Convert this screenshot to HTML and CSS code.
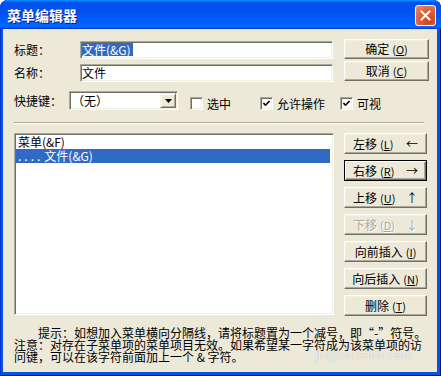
FILE: index.html
```html
<!DOCTYPE html>
<html lang="zh-CN">
<head>
<meta charset="UTF-8">
<meta name="viewport" content="width=device-width, initial-scale=1.0">
<title>菜单编辑器</title>
<link rel="stylesheet" href="styles.css">
</head>
<body>

<div class="window">
  <div class="titlebar">
    <span class="title">菜单编辑器</span>
    <span class="close">
      <svg width="11" height="11" viewBox="0 0 11 11"><path d="M1.5 1.5 L9.5 9.5 M9.5 1.5 L1.5 9.5" stroke="#fff" stroke-width="2" stroke-linecap="square"/></svg>
    </span>
  </div>

  <div class="content">
    <div class="top">
      <div class="fields">
        <div class="row">
          <span class="label">标题：</span>
          <div class="edit"><span class="sel">文件(&amp;G)</span></div>
        </div>
        <div class="row row-second">
          <span class="label">名称：</span>
          <div class="edit">文件</div>
        </div>
        <div class="row row-opts">
          <span class="label label-short">快捷键：</span>
          <div class="combo">
            <span class="combo-text">（无）</span>
            <span class="drop">
              <svg width="7" height="4" viewBox="0 0 7 4"><path d="M0 0 H7 L3.5 4 Z" fill="#000"/></svg>
            </span>
          </div>
          <span class="check check-1"><span class="box"></span>选中</span>
          <span class="check check-2"><span class="box"><svg width="7" height="7" viewBox="0 0 7 7"><path d="M0.5 3 L2.5 5.2 L6.5 1" fill="none" stroke="#000" stroke-width="1.6"/></svg></span>允许操作</span>
          <span class="check check-3"><span class="box"><svg width="7" height="7" viewBox="0 0 7 7"><path d="M0.5 3 L2.5 5.2 L6.5 1" fill="none" stroke="#000" stroke-width="1.6"/></svg></span>可视</span>
        </div>
      </div>
      <div class="side">
        <div class="btn">确定<span class="key">(<u>O</u>)</span></div>
        <div class="btn">取消<span class="key">(<u>C</u>)</span></div>
      </div>
    </div>

    <div class="sep"></div>

    <div class="middle">
      <div class="list">
        <div class="item">菜单(&amp;F)</div>
        <div class="item active"><span class="dots">....</span>文件(&amp;G)</div>
      </div>
      <div class="side side-list">
        <div class="btn btn-arrow"><span>左移<span class="key">(<u>L</u>)</span></span><span>←</span></div>
        <div class="btn btn-arrow btn-default"><span>右移<span class="key">(<u>R</u>)</span></span><span>→</span></div>
        <div class="btn btn-arrow"><span>上移<span class="key">(<u>U</u>)</span></span><span>↑</span></div>
        <div class="btn btn-arrow btn-disabled"><span>下移<span class="key">(<u>D</u>)</span></span><span>↓</span></div>
        <div class="btn">向前插入<span class="key">(<u>I</u>)</span></div>
        <div class="btn">向后插入<span class="key">(<u>N</u>)</span></div>
        <div class="btn">删除<span class="key">(<u>T</u>)</span></div>
      </div>
    </div>

    <p class="hint">提示：如想加入菜单横向分隔线，请将标题置为一个减号，即“-”符号。<br>注意：对存在子菜单项的菜单项目无效。如果希望某一字符成为该菜单项的访<br>问键，可以在该字符前面加上一个 &amp; 字符。</p>

    <span class="watermark">jingyan.baidu.com</span>
  </div>
</div>

</body>
</html>
```

FILE: styles.css
```css
html, body {
  margin: 0;
  background: #fff;
}
body {
  font-family: "Noto Sans CJK SC", "Noto Sans", sans-serif;
  font-size: 12px;
  color: #000;
}
.window {
  width: 441px;
  height: 376px;
  display: flex;
  flex-direction: column;
  overflow: hidden;
  border-radius: 8px 8px 0 0;
  background: #0855dd;
  box-shadow: inset 1px 0 #0831d9, inset -1px 0 #00138c, inset 0 -1px #00138c;
}
.titlebar {
  height: 29px;
  flex: none;
  display: flex;
  justify-content: space-between;
  align-items: flex-start;
  padding: 0 5px 0 7px;
  box-sizing: border-box;
  background: linear-gradient(180deg, #0997ff, #0053ee 8%, #0050ee 40%, #0066ff 88%, #0066ff 93%, #005bff 95%, #003dd7 96%, #003dd7);
}
.title {
  color: #fff;
  font-weight: bold;
  font-size: 14px;
  line-height: 16px;
  margin-top: 7px;
  text-shadow: 1px 1px 0 #0a1a8a;
}
.close {
  width: 21px;
  height: 21px;
  margin-top: 5px;
  box-sizing: border-box;
  border: 1px solid #fff;
  border-radius: 3px;
  background: radial-gradient(circle at 70% 80%, #cc4622 0, #e0603c 55%, #ee8a6a 100%);
  display: flex;
  align-items: center;
  justify-content: center;
}
.content {
  flex: 1;
  position: relative;
  margin: 0 4px 4px 3px;
  padding: 10px 8px 0 11px;
  background: #ece9d8;
}

/* top part: fields + ok/cancel */
.top {
  display: flex;
  gap: 11px;
}
.fields {
  width: 319px;
  padding-top: 2px;
}
.row {
  display: flex;
  align-items: center;
  height: 18px;
}
.row-second {
  margin-top: 5px;
}
.row-opts {
  margin-top: 9px;
  height: 19px;
  align-items: flex-start;
}
.label {
  width: 66px;
  line-height: 18px;
  flex: none;
}
.label-short {
  width: 55px;
  line-height: 19px;
}
.edit {
  width: 253px;
  height: 18px;
  box-sizing: border-box;
  background: #fff;
  border: 1px solid;
  border-color: #aca899 #fff #fff #aca899;
  box-shadow: inset 1px 1px #716f64, inset -1px -1px #f1efe2;
  padding: 1px 0 0 1px;
  line-height: 14px;
}
.sel {
  display: inline-block;
  background: #316ac5;
  color: #fff;
  line-height: 13px;
  padding-right: 2px;
}
.combo {
  width: 109px;
  height: 19px;
  box-sizing: border-box;
  background: #fff;
  border: 1px solid;
  border-color: #aca899 #fff #fff #aca899;
  box-shadow: inset 1px 1px #716f64, inset -1px -1px #f1efe2;
  display: flex;
  justify-content: space-between;
  padding: 1px;
  flex: none;
}
.combo-text {
  line-height: 15px;
  padding-left: 1px;
}
.drop {
  width: 16px;
  height: 15px;
  box-sizing: border-box;
  background: #ece9d8;
  border: 1px solid;
  border-color: #f1efe2 #716f64 #716f64 #f1efe2;
  box-shadow: inset 1px 1px #fff, inset -1px -1px #aca899;
  display: flex;
  align-items: center;
  justify-content: center;
}
.check {
  display: flex;
  align-items: center;
  gap: 4px;
  margin-top: 6px;
  line-height: 13px;
  flex: none;
}
.check-1 { margin-left: 12px; }
.check-2 { margin-left: 29px; }
.check-3 { margin-left: 15px; }
.box {
  width: 13px;
  height: 13px;
  box-sizing: border-box;
  background: #fff;
  border: 1px solid;
  border-color: #aca899 #fff #fff #aca899;
  box-shadow: inset 1px 1px #716f64, inset -1px -1px #f1efe2;
  display: flex;
  align-items: center;
  justify-content: center;
}

/* buttons */
.side {
  width: 85px;
  display: flex;
  flex-direction: column;
  gap: 2px;
}
.btn {
  height: 20px;
  box-sizing: border-box;
  background: #ece9d8;
  border: 1px solid;
  border-color: #fff #716f64 #716f64 #fff;
  box-shadow: inset -1px -1px #aca899, inset 1px 1px #f1efe2;
  display: flex;
  align-items: center;
  justify-content: center;
  line-height: 14px;
}
.key {
  margin-left: 3px;
  font-size: 11px;
}
.side-list {
  width: 83px;
  gap: 6px;
}
.side-list .btn {
  height: 21px;
}
.btn-arrow {
  justify-content: space-between;
  padding: 0 8px;
}
.btn-default {
  border-color: #000;
  box-shadow: inset 1px 1px #fff, inset -1px -1px #716f64, inset -2px -2px #aca899;
}
.btn-disabled {
  color: #aca899;
  text-shadow: 1px 1px 0 #fff;
}

.sep {
  height: 0;
  margin: 12px 5px 0 0;
  border-top: 1px solid #aca899;
  border-bottom: 1px solid #fff;
}

/* list */
.middle {
  display: flex;
  gap: 10px;
  margin-top: 9px;
}
.list {
  width: 320px;
  height: 182px;
  box-sizing: border-box;
  background: #fff;
  border: 1px solid;
  border-color: #aca899 #fff #fff #aca899;
  box-shadow: inset 1px 1px #716f64, inset -1px -1px #f1efe2;
  padding: 1px 3px 1px 1px;
}
.item {
  height: 14px;
  line-height: 14px;
  padding-left: 2px;
}
.item.active {
  background: #316ac5;
  color: #fff;
}
.dots {
  letter-spacing: 3px;
  margin-right: 1px;
}

.hint {
  margin: 11px 0 0 0;
  line-height: 12px;
  text-indent: 24px;
}
.watermark {
  position: absolute;
  right: 25px;
  bottom: 10px;
  font-family: "Liberation Sans", sans-serif;
  font-size: 12px;
  color: rgba(255, 255, 255, 0.75);
  text-shadow: 0 0 1px rgba(140, 140, 140, 0.6);
}
```
